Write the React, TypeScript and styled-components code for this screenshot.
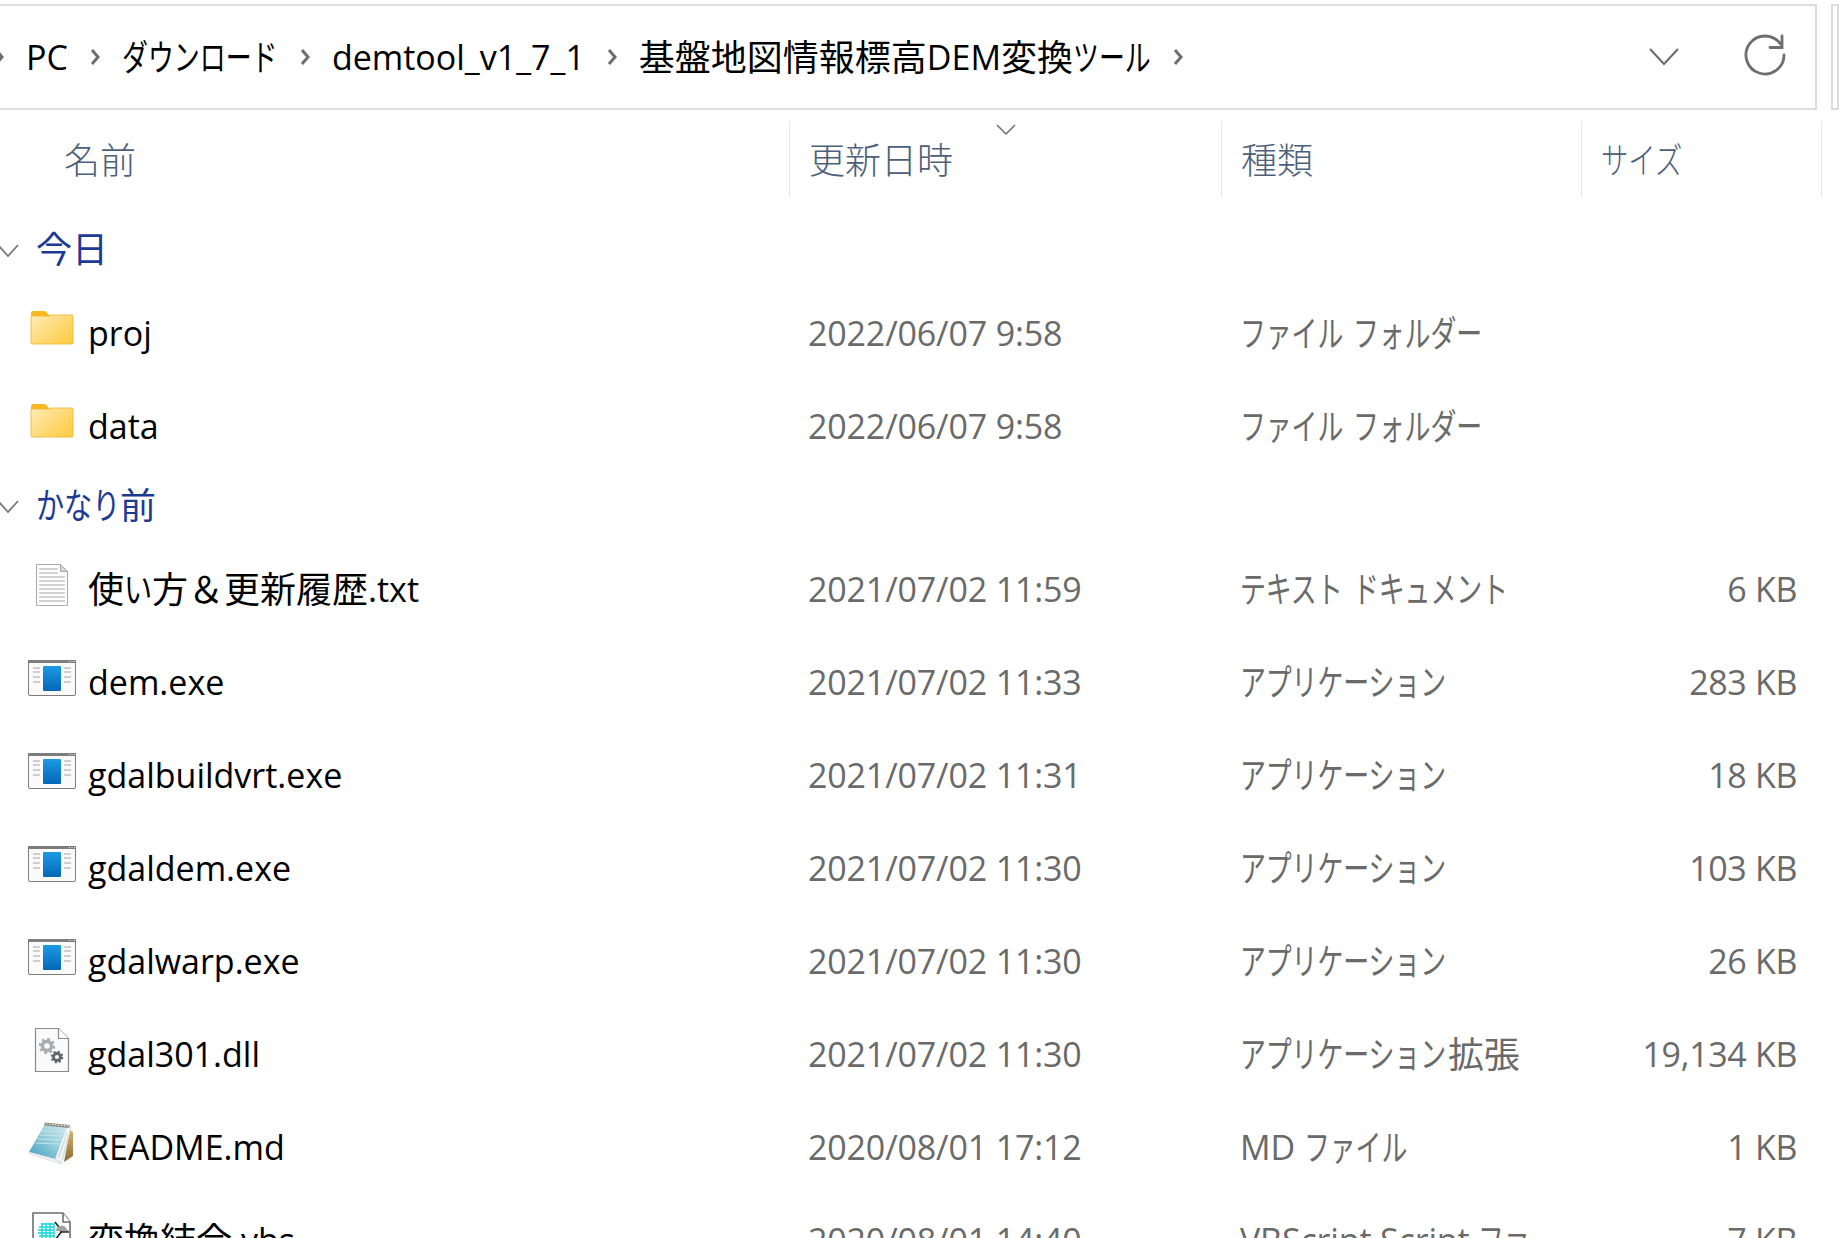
import React from "react"
import styled, { createGlobalStyle } from "styled-components"

const GlobalStyle = createGlobalStyle`
  html, body {
    margin: 0;
    background: #fff;
  }
`

const Page = styled.div`
  width: 1839px;
  height: 1238px;
  overflow: hidden;
  font-family: "Open Sans", "Noto Sans CJK JP", sans-serif;
  font-size: 34px;
  line-height: 50px;
  color: #000;
`

const Kanji = styled.span`
  font-size: 36px;
  line-height: 1;
  font-weight: 400;
  vertical-align: -1px;
`

// Meiryo UI kana are much narrower than Noto's, so squeeze them
const Kana = styled.span<{ $n: number; $hira?: boolean }>`
  display: inline-block;
  font-size: 36px;
  line-height: 1;
  font-weight: 400;
  white-space: nowrap;
  vertical-align: -1px;
  width: ${(p) => p.$n * (p.$hira ? 28 : 26)}px;
  transform: scaleX(${(p) => (p.$hira ? 0.78 : 0.72)});
  transform-origin: left center;
`

const TopBar = styled.div`
  display: flex;
  gap: 14px;
  padding-top: 4px;
`

const AddressBox = styled.div`
  width: 1823px;
  height: 106px;
  flex: none;
  box-sizing: border-box;
  border: 2px solid #dcdcdc;
  border-left: 0;
  display: flex;
  align-items: center;
  gap: 22px;
  padding: 0 29px 0 0;
  margin-left: -6px;
`

const SearchBox = styled.div`
  flex: 1;
  box-sizing: border-box;
  border: 2px solid #dcdcdc;
`

const Crumb = styled.span`
  white-space: nowrap;
`

const BarSpacer = styled.div`
  flex: 1;
`

const ToolIcon = styled.svg<{ $gap?: number; $lift?: number }>`
  flex: none;
  margin-left: ${(p) => p.$gap || 0}px;
  margin-bottom: ${(p) => p.$lift || 0}px;
`

const HeaderRow = styled.div`
  display: grid;
  grid-template-columns: 789px 432px 360px 241px;
  height: 76px;
  margin-top: 11px;
  color: #4c6079;
`

const HeaderCell = styled.div<{ $first?: boolean }>`
  position: relative;
  display: flex;
  align-items: center;
  box-sizing: border-box;
  padding: 3px 0 0 ${(p) => (p.$first ? 64 : 19)}px;
  border-left: ${(p) => (p.$first ? "0" : "1px solid #e5e5e5")};
  &:last-child {
    border-right: 1px solid #e5e5e5;
  }
  ${Kanji} {
    font-weight: 300;
  }
  ${Kana} {
    font-weight: 300;
    width: 82px;
    transform: scaleX(0.76);
  }
`

const SortCaret = styled.svg`
  position: absolute;
  left: 206px;
  top: 3px;
`

const ListBody = styled.div`
  padding-top: 18px;
`

const GroupRow = styled.div`
  box-sizing: border-box;
  height: 71px;
  padding-bottom: 4px;
  display: flex;
  align-items: center;
  gap: 16px;
  margin-left: -4px;
  color: #1c3a94;
`

const GroupChevron = styled.svg`
  margin-top: 4px;
`

const GroupList = styled.div`
  &:not(:first-child) > ${GroupRow} {
    height: 70px;
  }
`

const FileRow = styled.div`
  display: grid;
  grid-template-columns: 789px 432px 360px 241px;
  height: 93px;
  align-items: center;
`

const NameCell = styled.div`
  display: flex;
  align-items: center;
  gap: 12px;
  padding-left: 28px;
  white-space: nowrap;
`

const FileIcon = styled.svg`
  flex: none;
  margin-bottom: 10px;
`

const InfoCell = styled.div`
  padding-left: 19px;
  color: #6a6a6a;
  white-space: nowrap;
  overflow: hidden;
  letter-spacing: -0.15px;
`

const SizeCell = styled.div`
  padding-right: 25px;
  color: #6a6a6a;
  text-align: right;
  white-space: nowrap;
  letter-spacing: -0.35px;
`

const Txt = ({ s }: { s: string }) => {
  const parts = s.split(/([\u3040-\u309f]+|[\u30a0-\u30ff]+|[\u4e00-\u9fff\uff06]+)/).filter(Boolean)
  return (
    <>
      {parts.map((p, i) => {
        if (/^[\u3040-\u309f]/.test(p)) return <Kana key={i} $n={p.length} $hira>{p}</Kana>
        if (/^[\u30a0-\u30ff]/.test(p)) return <Kana key={i} $n={p.length}>{p}</Kana>
        if (/^[\u4e00-\u9fff\uff06]/.test(p)) return <Kanji key={i}>{p}</Kanji>
        return <span key={i}>{p}</span>
      })}
    </>
  )
}

const Chevron = () => (
  <svg width="10" height="18" viewBox="0 0 10 18" style={{ flex: "none" }}>
    <path d="M2 2l6 7-6 7" fill="none" stroke="#6e6e6e" strokeWidth="3" />
  </svg>
)

const FolderIcon = () => (
  <FileIcon width="48" height="48" viewBox="0 0 48 48">
    <defs>
      <linearGradient id="fold" x1="0" y1="0.2" x2="1" y2="1">
        <stop offset="0" stopColor="#ffe9ab" />
        <stop offset="1" stopColor="#fdca3c" />
      </linearGradient>
    </defs>
    <path d="M3 9q0-2 2-2h11q2 0 4 3l1 1v8H3z" fill="#fbb81c" />
    <path d="M3 13q0-1 1-1h17l3-1h20q1 0 1 1v27q0 1-1 1H4q-1 0-1-1z" fill="url(#fold)" stroke="#eeb52e" strokeWidth="0.8" />
  </FileIcon>
)

const TextIcon = () => (
  <FileIcon width="48" height="48" viewBox="0 0 48 48">
    <path d="M8.5 4.5h24l7 7v34h-31z" fill="#fff" stroke="#a9a9a9" strokeWidth="1" />
    <path d="M32.5 4.5v7h7z" fill="#d8d8d8" stroke="#a9a9a9" strokeWidth="1" />
    <path
      d="M11 9h19M11 13h19M11 17h26M11 21h26M11 25h26M11 29h26M11 33h26M11 37h26M11 41h26"
      stroke="#c4c4c4"
      strokeWidth="1.4"
    />
  </FileIcon>
)

const ExeIcon = () => (
  <FileIcon width="48" height="48" viewBox="0 0 48 48">
    <defs>
      <linearGradient id="exe" x1="0" y1="0" x2="0" y2="1">
        <stop offset="0" stopColor="#1b9ae4" />
        <stop offset="1" stopColor="#0567b8" />
      </linearGradient>
    </defs>
    <rect x="0.5" y="7.5" width="47" height="35" rx="1.5" fill="#fafafa" stroke="#7d7d7d" />
    <rect x="0" y="7" width="48" height="3" fill="#7d7d7d" />
    <path d="M41 8.5h1M43.5 8.5h1M46 8.5h1" stroke="#e8e8e8" />
    <rect x="15" y="13" width="18" height="25" rx="1" fill="url(#exe)" />
    <path d="M5 15h7M5 19h7M5 24h7M5 29h7M36 15h7M36 19h7M36 24h7M36 29h7" stroke="#a4a4a4" strokeWidth="1.2" />
  </FileIcon>
)

const DllIcon = () => (
  <FileIcon width="48" height="48" viewBox="0 0 48 48">
    <path d="M7.5 3.5h23l10 10v33h-33z" fill="#fafafa" stroke="#8a8a8a" strokeWidth="1.2" />
    <path d="M30.5 3.5v10h10" fill="#fff" stroke="#8a8a8a" strokeWidth="1.2" />
    <circle cx="19" cy="21" r="4.6" fill="none" stroke="#a6adb3" strokeWidth="3.6" />
    <circle cx="19" cy="21" r="7" fill="none" stroke="#a6adb3" strokeWidth="2.4" strokeDasharray="2.6 2.9" />
    <circle cx="29" cy="32" r="3.5" fill="none" stroke="#5f666c" strokeWidth="2.8" />
    <circle cx="29" cy="32" r="5.3" fill="none" stroke="#5f666c" strokeWidth="2" strokeDasharray="2.1 2.06" />
  </FileIcon>
)

const NotepadIcon = () => (
  <FileIcon width="48" height="48" viewBox="0 0 48 48">
    <defs>
      <linearGradient id="pad" x1="0" y1="1" x2="1" y2="0">
        <stop offset="0" stopColor="#3f9fc0" />
        <stop offset="0.6" stopColor="#9fd2df" />
        <stop offset="1" stopColor="#d4eaf0" />
      </linearGradient>
      <linearGradient id="spine" x1="0" y1="0" x2="0" y2="1">
        <stop offset="0" stopColor="#d8b46a" />
        <stop offset="1" stopColor="#8a6a36" />
      </linearGradient>
    </defs>
    <path d="M42 12l3 2v24l-9 6z" fill="url(#spine)" />
    <path d="M39 8l4 1-9 36-7-4z" fill="#f4f7f8" stroke="#c9d0d4" strokeWidth="0.6" />
    <path d="M39 14l-8 26M41 16l-7 26M37 22l-7 17" stroke="#c9d3d8" strokeWidth="0.8" />
    <path d="M17 6l22 2-12 33-26-7z" fill="url(#pad)" />
    <path d="M14 13l22 1M12 17l22 1M10 21l23 1M8 25l23 1" stroke="#c6e4ec" strokeWidth="1" />
    <path d="M1 34l26 7 7 4-1 1-31-10z" fill="#eef2f3" stroke="#c4ccd0" strokeWidth="0.5" />
    <path d="M17 4.5l25 2.5-1 3-25-2.500z" fill="#8d8d82" />
    <path d="M18 6l23 2" stroke="#e6e6e0" strokeWidth="1.2" strokeDasharray="1.5 1.5" />
  </FileIcon>
)

const VbsIcon = () => (
  <FileIcon width="48" height="48" viewBox="0 0 48 48">
    <path d="M5 2h30l7 9v36H5z" fill="#fff" stroke="#6f6f6f" strokeWidth="1.6" />
    <path d="M35 2v9h7" fill="#fff" stroke="#6f6f6f" strokeWidth="1.6" />
    <path d="M13 13h13M11 16h15M10 19h16M10 22h16M11 25h15M13 28h13M14 12v18M18 12v18M22 12v18M26 12v18" stroke="#12d6dc" strokeWidth="1.3" />
    <path d="M27 11l7 9-7 9" fill="none" stroke="#222" strokeWidth="1.6" />
    <path d="M28 20a5.5 5.5 0 0 1 10-3l3 4z" fill="#a0a0a0" />
    <path d="M32 21h9" stroke="#222" strokeWidth="1.4" />
  </FileIcon>
)

type IconKind = "folder" | "text" | "exe" | "dll" | "notepad" | "vbs"

const icons: Record<IconKind, React.FC> = {
  folder: FolderIcon,
  text: TextIcon,
  exe: ExeIcon,
  dll: DllIcon,
  notepad: NotepadIcon,
  vbs: VbsIcon,
}

type FileItem = { name: string; date: string; kind: string; size: string; icon: IconKind }

const groups: { title: string; files: FileItem[] }[] = [
  {
    title: "今日",
    files: [
      { name: "proj", date: "2022/06/07 9:58", kind: "ファイル フォルダー", size: "", icon: "folder" },
      { name: "data", date: "2022/06/07 9:58", kind: "ファイル フォルダー", size: "", icon: "folder" },
    ],
  },
  {
    title: "かなり前",
    files: [
      { name: "使い方＆更新履歴.txt", date: "2021/07/02 11:59", kind: "テキスト ドキュメント", size: "6 KB", icon: "text" },
      { name: "dem.exe", date: "2021/07/02 11:33", kind: "アプリケーション", size: "283 KB", icon: "exe" },
      { name: "gdalbuildvrt.exe", date: "2021/07/02 11:31", kind: "アプリケーション", size: "18 KB", icon: "exe" },
      { name: "gdaldem.exe", date: "2021/07/02 11:30", kind: "アプリケーション", size: "103 KB", icon: "exe" },
      { name: "gdalwarp.exe", date: "2021/07/02 11:30", kind: "アプリケーション", size: "26 KB", icon: "exe" },
      { name: "gdal301.dll", date: "2021/07/02 11:30", kind: "アプリケーション拡張", size: "19,134 KB", icon: "dll" },
      { name: "README.md", date: "2020/08/01 17:12", kind: "MD ファイル", size: "1 KB", icon: "notepad" },
      { name: "変換結合.vbs", date: "2020/08/01 14:40", kind: "VBScript Script ファ", size: "7 KB", icon: "vbs" },
    ],
  },
]

const crumbs = ["PC", "ダウンロード", "demtool_v1_7_1", "基盤地図情報標高DEM変換ツール"]

const App = () => {
  return (
    <Page>
      <GlobalStyle />
      <TopBar>
        <AddressBox>
          <Chevron />
          {crumbs.map((c) => (
            <React.Fragment key={c}>
              <Crumb>
                <Txt s={c} />
              </Crumb>
              <Chevron />
            </React.Fragment>
          ))}
          <BarSpacer />
          <ToolIcon width="32" height="20" viewBox="0 0 32 20">
            <path d="M2 2l14 15L30 2" fill="none" stroke="#6e6e6e" strokeWidth="2.2" />
          </ToolIcon>
          <ToolIcon $gap={42.5} $lift={4} width="42" height="44" viewBox="0 0 42 44">
            <path d="M36.5 11A19 19 0 1 0 40 22" fill="none" stroke="#6e6e6e" strokeWidth="2.8" strokeLinecap="round" />
            <path d="M38 3v11.5H26" fill="none" stroke="#6e6e6e" strokeWidth="2.8" strokeLinecap="round" />
          </ToolIcon>
        </AddressBox>
        <SearchBox />
      </TopBar>

      <HeaderRow>
        <HeaderCell $first>
          <Txt s="名前" />
        </HeaderCell>
        <HeaderCell>
          <Txt s="更新日時" />
          <SortCaret width="20" height="12" viewBox="0 0 20 12">
            <path d="M1 1l9 9 9-9" fill="none" stroke="#6e6e6e" strokeWidth="1.5" />
          </SortCaret>
        </HeaderCell>
        <HeaderCell>
          <Txt s="種類" />
        </HeaderCell>
        <HeaderCell>
          <Txt s="サイズ" />
        </HeaderCell>
      </HeaderRow>

      <ListBody>
        {groups.map((g) => (
          <GroupList key={g.title}>
            <GroupRow>
              <GroupChevron width="24" height="14" viewBox="0 0 24 14">
                <path d="M2 1l10 11L22 1" fill="none" stroke="#777" strokeWidth="1.8" />
              </GroupChevron>
              <span>
                <Txt s={g.title} />
              </span>
            </GroupRow>
            {g.files.map((f) => {
              const Icon = icons[f.icon]
              return (
                <FileRow key={f.name}>
                  <NameCell>
                    <Icon />
                    <span>
                      <Txt s={f.name} />
                    </span>
                  </NameCell>
                  <InfoCell>{f.date}</InfoCell>
                  <InfoCell>
                    <Txt s={f.kind} />
                  </InfoCell>
                  <SizeCell>{f.size}</SizeCell>
                </FileRow>
              )
            })}
          </GroupList>
        ))}
      </ListBody>
    </Page>
  )
}

export default App
